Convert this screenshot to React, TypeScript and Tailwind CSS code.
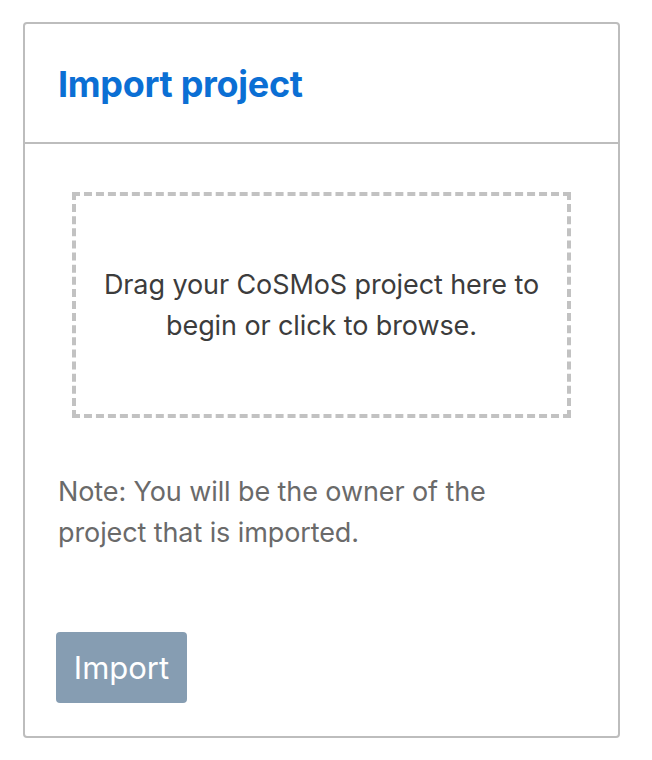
export default function App() {
  return (
    <div className="min-h-screen bg-white pt-[22px] pl-[23px]" style={{ fontFamily: "Inter, 'Noto Sans', sans-serif" }}>
      <div className="w-[597px] h-[716px] border-2 border-[#bdbdbd] rounded-[4px] flex flex-col">
        {/* header */}
        <div className="h-[120px] border-b-2 border-[#bdbdbd] flex items-center pl-[33px] pt-[2px]">
          <h2 className="text-[36px] font-bold text-[#0b6fd4] tracking-[-0.3px]">Import project</h2>
        </div>

        {/* body */}
        <div className="px-[33px] pt-[48px] flex flex-col">
          <div className="mx-[14px] h-[226px] border-4 border-dashed border-[#c2c2c2] flex items-center justify-center text-center cursor-pointer">
            <p className="text-[27px] leading-[41px] text-[#3c3c3c] tracking-[-0.1px]">
              Drag your CoSMoS project here to
              <br />
              begin or click to browse.
            </p>
          </div>

          <p className="mt-[53px] text-[27px] leading-[41px] text-[#6a6a6a] tracking-[-0.1px] max-w-[470px]">
            Note: You will be the owner of the project that is imported.
          </p>

          <div className="mt-[79px]">
            <button className="h-[71px] w-[131px] -ml-[2px] rounded-[4px] bg-[#869db2] text-white text-[31px] pt-[2px]">
              Import
            </button>
          </div>
        </div>
      </div>
    </div>
  );
}
